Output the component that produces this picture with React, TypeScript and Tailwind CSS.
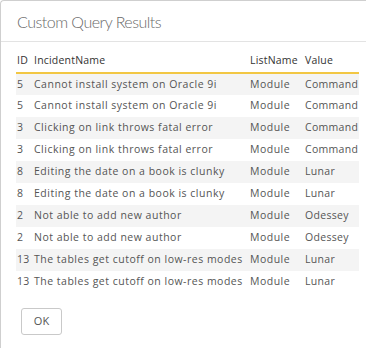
import React from 'react';

interface Row {
  id: number;
  name: string;
  list: string;
  value: string;
}

const ROWS: Row[] = [
  { id: 5, name: 'Cannot install system on Oracle 9i', list: 'Module', value: 'Command' },
  { id: 5, name: 'Cannot install system on Oracle 9i', list: 'Module', value: 'Command' },
  { id: 3, name: 'Clicking on link throws fatal error', list: 'Module', value: 'Command' },
  { id: 3, name: 'Clicking on link throws fatal error', list: 'Module', value: 'Command' },
  { id: 8, name: 'Editing the date on a book is clunky', list: 'Module', value: 'Lunar' },
  { id: 8, name: 'Editing the date on a book is clunky', list: 'Module', value: 'Lunar' },
  { id: 2, name: 'Not able to add new author', list: 'Module', value: 'Odessey' },
  { id: 2, name: 'Not able to add new author', list: 'Module', value: 'Odessey' },
  { id: 13, name: 'The tables get cutoff on low-res modes', list: 'Module', value: 'Lunar' },
  { id: 13, name: 'The tables get cutoff on low-res modes', list: 'Module', value: 'Lunar' },
];

const App: React.FC = () => {
  return (
    <div className="w-[366px] h-[348px] overflow-hidden bg-white" style={{ fontFamily: '"Open Sans", sans-serif' }}>
      <div className="h-full w-[380px] border-l border-t border-[#cfcfcf] rounded-tl-[4px]">
        {/* title bar */}
        <div className="h-[41px] border-b border-[#e3e3e3] flex items-center pl-[16px]">
          <h1
            className="text-[16px] font-light tracking-[-0.5px] text-[#6a6a6a] leading-none pt-[2px]"
            style={{ fontFamily: 'Lato, "Open Sans", sans-serif' }}
          >
            Custom Query Results
          </h1>
        </div>

        <div className="pl-[15px] pt-[8px]">
          <table className="table-fixed w-[343px] border-collapse text-[10.5px] tracking-[0.5px] text-[#555]">
            <colgroup>
              <col className="w-[17px]" />
              <col className="w-[216px]" />
              <col className="w-[55px]" />
              <col className="w-[55px]" />
            </colgroup>
            <thead>
              <tr className="h-[23px] border-b-2 border-[#f2c744] text-[#333]">
                <th className="text-left font-normal pl-[1px] whitespace-nowrap tracking-[0.2px]">ID</th>
                <th className="text-left font-normal pl-[1px] whitespace-nowrap tracking-[0.2px]">IncidentName</th>
                <th className="text-left font-normal pl-[1px] whitespace-nowrap tracking-[0.2px]">ListName</th>
                <th className="text-left font-normal pl-[1px] whitespace-nowrap tracking-[0.2px]">Value</th>
              </tr>
            </thead>
            <tbody>
              {ROWS.map((r, i) => (
                <tr key={i} className={`h-[22px] ${i % 2 === 0 ? 'bg-[#f4f4f4]' : 'bg-white'}`}>
                  <td className="pl-[1px] whitespace-nowrap tracking-[0.2px]">{r.id}</td>
                  <td className="pl-[1px] whitespace-nowrap">{r.name}</td>
                  <td className="pl-[1px] whitespace-nowrap">{r.list}</td>
                  <td className="pl-[1px] whitespace-nowrap tracking-[0.3px]">{r.value}</td>
                </tr>
              ))}
            </tbody>
          </table>

          <button className="mt-[15px] ml-[5px] w-[41px] h-[27px] border border-[#c9c9c9] rounded-[3px] bg-white text-[11px] text-[#555]">
            OK
          </button>
        </div>
      </div>
    </div>
  );
};

export default App;
